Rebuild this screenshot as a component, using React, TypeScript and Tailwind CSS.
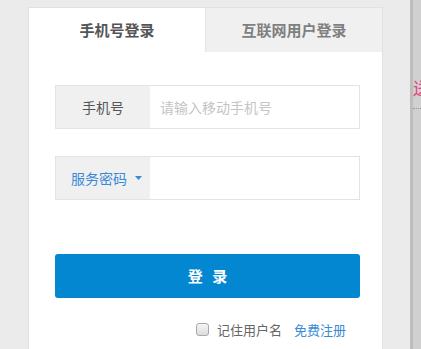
import React, { useState } from 'react';

export default function App() {
  const [remember, setRemember] = useState(false);
  const [tab, setTab] = useState<'phone' | 'net'>('phone');

  return (
    <div
      className="w-[421px] h-[349px] overflow-hidden bg-[#ebebeb] flex"
      style={{ fontFamily: '"Noto Sans CJK SC", "Noto Sans", sans-serif' }}
    >
      {/* Login panel */}
      <div className="ml-[28px] mt-[7px] w-[355px] h-[360px] shrink-0 bg-white border border-[#e2e2e2] flex flex-col">
        {/* Tabs */}
        <div className="flex h-[44px]">
          <button
            onClick={() => setTab('phone')}
            className="w-[176px] flex items-center justify-center text-[15px] font-bold text-[#555]"
          >
            手机号登录
          </button>
          <button
            onClick={() => setTab('net')}
            className="flex-1 flex items-center justify-center text-[15px] font-bold text-[#7f7f7f] bg-[#f0f0f0] border-l border-[#e4e4e4]"
          >
            互联网用户登录
          </button>
        </div>

        <div className="pl-[26px] pt-[33px] flex flex-col">
          {/* Phone row */}
          <div className="w-[305px] h-[44px] flex border border-[#e3e3e3]">
            <div className="w-[94px] bg-[#f0f0f0] flex items-center justify-center text-[14px] text-[#555]">
              手机号
            </div>
            <input
              placeholder="请输入移动手机号"
              className="flex-1 min-w-0 pl-[10px] text-[14px] text-[#333] placeholder-[#c4c4c4] outline-none"
            />
          </div>

          {/* Password row */}
          <div className="mt-[27px] w-[305px] h-[44px] flex border border-[#e3e3e3]">
            <div className="w-[94px] bg-[#f0f0f0] flex items-center pl-[15px] text-[14px] text-[#3a8ad6]">
              服务密码
              <svg className="ml-[8px] w-[7px] h-[4px]" viewBox="0 0 7 4">
                <path d="M0 0h7L3.5 4z" fill="#3a8ad6" />
              </svg>
            </div>
            <input type="password" className="flex-1 min-w-0 pl-[10px] text-[14px] outline-none" />
          </div>

          {/* Submit */}
          <button className="mt-[54px] w-[305px] h-[44px] rounded-[3px] bg-[#0287d0] text-white text-[15px] font-bold tracking-[3px] pl-[3px] flex items-center justify-center">
            登 录
          </button>

          {/* Remember / register */}
          <div className="mt-[22px] w-[305px] flex items-center justify-end pr-[14px] text-[13px]">
            <label className="flex items-center cursor-pointer">
              <span
                onClick={() => setRemember(!remember)}
                className="w-[13px] h-[13px] rounded-[3px] border border-[#a8a8a8] bg-gradient-to-b from-[#f6f6f6] to-[#dcdcdc]"
              />
              <span className="ml-[8px] text-[#666]">记住用户名</span>
            </label>
            <a className="ml-[12px] text-[#3a8ad6] cursor-pointer">免费注册</a>
          </div>
        </div>
      </div>

      {/* Right edge of the page behind */}
      <div className="ml-[27px] w-[3px] h-full bg-[#bdbdbd] shrink-0" />
      <div className="flex-1 h-full bg-[#d0d0d0] flex flex-col overflow-hidden">
        <div className="mt-[78px] text-[17px] leading-[20px] text-[#e0467c] whitespace-nowrap">送</div>
        <div className="mt-[10px] border-t border-dotted border-[#9a9a9a] w-full" />
      </div>
    </div>
  );
}
